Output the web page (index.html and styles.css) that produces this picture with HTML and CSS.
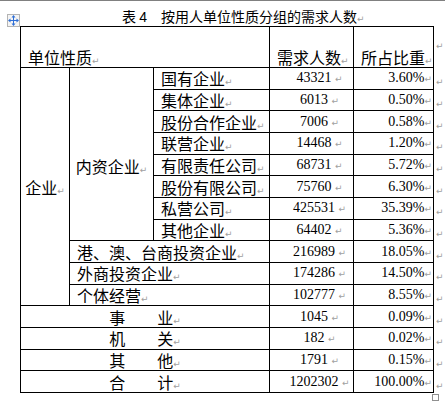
FILE: index.html
```html
<!DOCTYPE html>
<html lang="zh-CN">
<head>
  <meta charset="UTF-8">
  <meta name="viewport" content="width=device-width, initial-scale=1.0">
  <title>表4 按用人单位性质分组的需求人数</title>
  <link rel="stylesheet" href="styles.css">
</head>
<body>
  <div class="page">
    <div class="caption">表 <span class="latin">4</span>　按用人单位性质分组的需求人数<span class="rm">↵</span></div>

    <div class="move-handle">
      <svg width="11" height="11" viewBox="0 0 11 11">
        <path d="M5.5 1v9M1 5.5h9" stroke="#2f6fd6" stroke-width="1" fill="none"/>
        <path d="M5.5 0L3.5 2.5h4zM5.5 11L3.5 8.5h4zM0 5.5L2.5 3.5v4zM11 5.5L8.5 3.5v4z" fill="#2f6fd6"/>
      </svg>
    </div>

    <table class="stats">
      <colgroup>
        <col class="c1"><col class="c2"><col class="c3"><col class="c4"><col class="c5"><col class="c6">
      </colgroup>
      <tr class="head">
        <th colspan="3">单位性质<span class="rm">↵</span></th>
        <th>需求人数<span class="rm">↵</span></th>
        <th>所占比重<span class="rm">↵</span></th>
        <td class="eor"><span class="rm">↵</span></td>
      </tr>
      <tr>
        <td rowspan="11" class="mid">企业<span class="rm">↵</span></td>
        <td rowspan="8" class="mid inner">内资企业<span class="rm">↵</span></td>
        <td>国有企业<span class="rm">↵</span></td>
        <td class="num">43321 <span class="rm">↵</span></td>
        <td class="pct">3.60%<span class="rm">↵</span></td>
        <td class="eor"><span class="rm">↵</span></td>
      </tr>
      <tr>
        <td>集体企业<span class="rm">↵</span></td>
        <td class="num">6013 <span class="rm">↵</span></td>
        <td class="pct">0.50%<span class="rm">↵</span></td>
        <td class="eor"><span class="rm">↵</span></td>
      </tr>
      <tr>
        <td>股份合作企业<span class="rm">↵</span></td>
        <td class="num">7006 <span class="rm">↵</span></td>
        <td class="pct">0.58%<span class="rm">↵</span></td>
        <td class="eor"><span class="rm">↵</span></td>
      </tr>
      <tr>
        <td>联营企业<span class="rm">↵</span></td>
        <td class="num">14468 <span class="rm">↵</span></td>
        <td class="pct">1.20%<span class="rm">↵</span></td>
        <td class="eor"><span class="rm">↵</span></td>
      </tr>
      <tr>
        <td>有限责任公司<span class="rm">↵</span></td>
        <td class="num">68731 <span class="rm">↵</span></td>
        <td class="pct">5.72%<span class="rm">↵</span></td>
        <td class="eor"><span class="rm">↵</span></td>
      </tr>
      <tr>
        <td>股份有限公司<span class="rm">↵</span></td>
        <td class="num">75760 <span class="rm">↵</span></td>
        <td class="pct">6.30%<span class="rm">↵</span></td>
        <td class="eor"><span class="rm">↵</span></td>
      </tr>
      <tr>
        <td>私营公司<span class="rm">↵</span></td>
        <td class="num">425531 <span class="rm">↵</span></td>
        <td class="pct">35.39%<span class="rm">↵</span></td>
        <td class="eor"><span class="rm">↵</span></td>
      </tr>
      <tr>
        <td>其他企业<span class="rm">↵</span></td>
        <td class="num">64402 <span class="rm">↵</span></td>
        <td class="pct">5.36%<span class="rm">↵</span></td>
        <td class="eor"><span class="rm">↵</span></td>
      </tr>
      <tr>
        <td colspan="2">港、澳、台商投资企业<span class="rm">↵</span></td>
        <td class="num">216989 <span class="rm">↵</span></td>
        <td class="pct">18.05%<span class="rm">↵</span></td>
        <td class="eor"><span class="rm">↵</span></td>
      </tr>
      <tr>
        <td colspan="2">外商投资企业<span class="rm">↵</span></td>
        <td class="num">174286 <span class="rm">↵</span></td>
        <td class="pct">14.50%<span class="rm">↵</span></td>
        <td class="eor"><span class="rm">↵</span></td>
      </tr>
      <tr>
        <td colspan="2">个体经营<span class="rm">↵</span></td>
        <td class="num">102777 <span class="rm">↵</span></td>
        <td class="pct">8.55%<span class="rm">↵</span></td>
        <td class="eor"><span class="rm">↵</span></td>
      </tr>
      <tr>
        <td colspan="3" class="center">事　　业<span class="rm">↵</span></td>
        <td class="num">1045 <span class="rm">↵</span></td>
        <td class="pct">0.09%<span class="rm">↵</span></td>
        <td class="eor"><span class="rm">↵</span></td>
      </tr>
      <tr>
        <td colspan="3" class="center">机　　关<span class="rm">↵</span></td>
        <td class="num">182 <span class="rm">↵</span></td>
        <td class="pct">0.02%<span class="rm">↵</span></td>
        <td class="eor"><span class="rm">↵</span></td>
      </tr>
      <tr>
        <td colspan="3" class="center">其　　他<span class="rm">↵</span></td>
        <td class="num">1791 <span class="rm">↵</span></td>
        <td class="pct">0.15%<span class="rm">↵</span></td>
        <td class="eor"><span class="rm">↵</span></td>
      </tr>
      <tr>
        <td colspan="3" class="center">合　　计<span class="rm">↵</span></td>
        <td class="num">1202302 <span class="rm">↵</span></td>
        <td class="pct">100.00%<span class="rm">↵</span></td>
        <td class="eor"><span class="rm">↵</span></td>
      </tr>
    </table>

    <div class="resize-handle"></div>
  </div>
</body>
</html>
```

FILE: styles.css
```css
body, html {
  margin: 0;
  padding: 0;
  background: #fff;
}
.page {
  position: relative;
  width: 445px;
  height: 404px;
  border-top: 1px solid #808080;
  font-family: "Noto Sans CJK SC", sans-serif;
  color: #000;
}
.caption {
  height: 20px;
  padding: 5px 0 0 122px;
  font-size: 14px;
  line-height: 20px;
  white-space: pre;
}
.caption .latin {
  font-family: "Liberation Sans", sans-serif;
}
.rm {
  font-family: "DejaVu Sans", sans-serif;
  font-size: 9px;
  line-height: 0;
  color: #a0a0a0;
}
.move-handle {
  position: absolute;
  left: 7px;
  top: 13px;
  width: 11px;
  height: 11px;
  border: 1px solid #b4b4b4;
  background: #f4f4f4;
  display: flex;
  align-items: center;
  justify-content: center;
}
.resize-handle {
  position: absolute;
  left: 432px;
  top: 393px;
  width: 5px;
  height: 5px;
  border: 1px solid #909090;
  background: #fff;
}
.stats {
  margin-left: 20px;
  border-collapse: collapse;
  table-layout: fixed;
  width: 427px;
}
.c1 { width: 49px; }
.c2 { width: 84px; }
.c3 { width: 116px; }
.c4 { width: 84px; }
.c5 { width: 80px; }
.c6 { width: 14px; }
.stats th,
.stats td {
  border: 1px solid #000;
  padding: 0 0 0 7px;
  font-size: 16px;
  font-weight: normal;
  line-height: 18px;
  text-align: left;
  vertical-align: middle;
  white-space: nowrap;
}
.stats tr {
  height: 21.67px;
}
.stats tr.head {
  height: 41px;
}
.stats tr.head th {
  vertical-align: bottom;
  padding-bottom: 1px;
}
.stats td.mid {
  text-align: center;
  padding: 0;
}
.stats td.inner {
  padding-top: 24px;
}
.stats td.center {
  text-align: center;
  padding: 0;
}
.stats td.num {
  font-family: "Liberation Serif", serif;
  font-size: 14px;
  text-align: center;
  padding-left: 16px;
}
.stats td.pct {
  font-family: "Liberation Serif", serif;
  font-size: 14px;
  text-align: right;
  padding: 0 1px 0 0;
}
.stats td.eor {
  border: none;
  padding-left: 2px;
}
.stats tr.head td.eor {
  vertical-align: top;
  padding-top: 6px;
}
```
